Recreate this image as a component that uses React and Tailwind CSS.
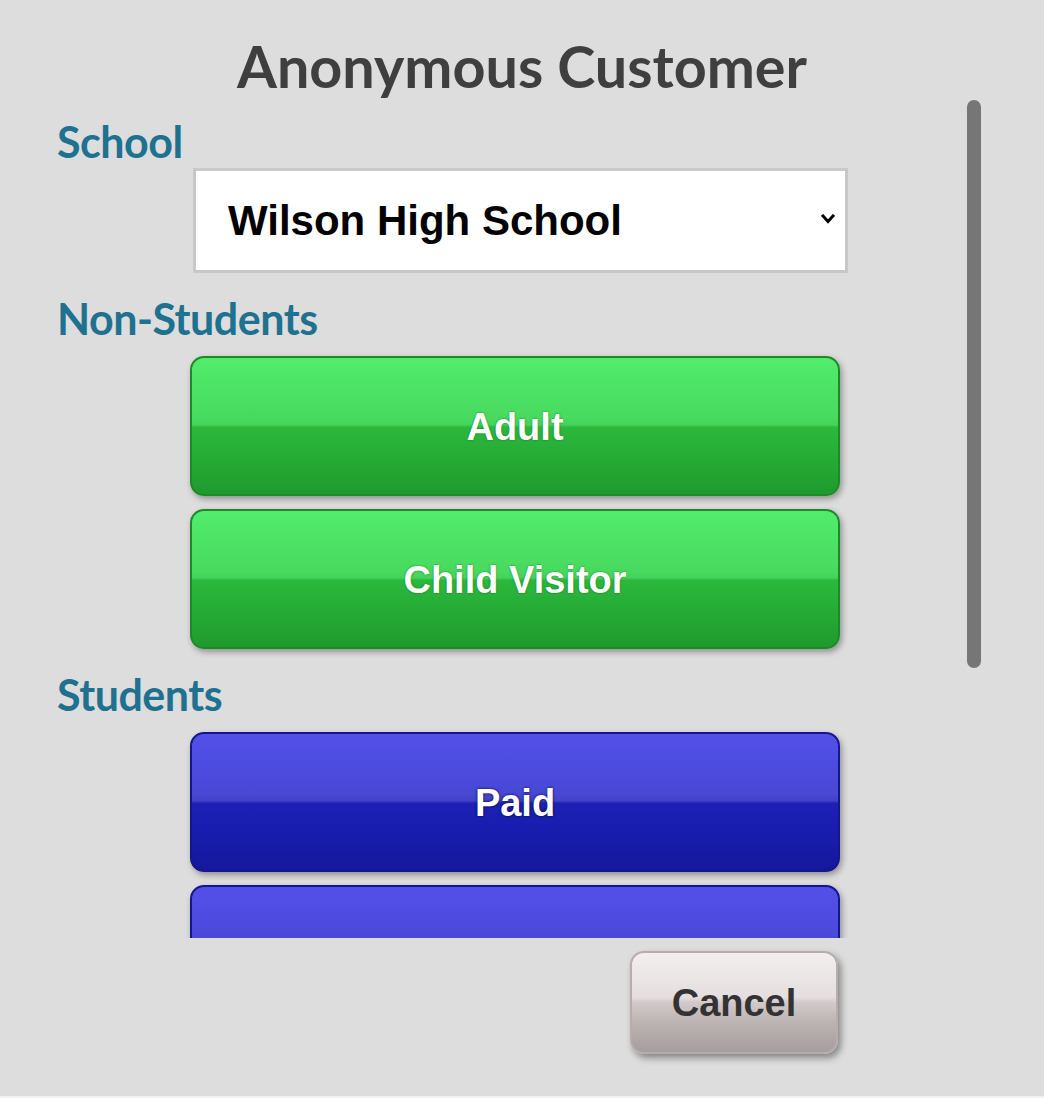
import React from "react";

const btnText =
  "font-['Liberation_Sans',Arial,sans-serif] font-bold text-[38px] text-white";

function GreenButton({ children }) {
  return (
    <button
      className={`ml-[190px] w-[650px] h-[140px] shrink-0 rounded-[14px] border-2 border-[#1d8a2a] bg-[linear-gradient(to_bottom,#52ec6c_0%,#48da5f_44%,#45d35b_49%,#2bb83c_51%,#25ab35_75%,#1f9a2d_100%)] shadow-[2px_3px_6px_rgba(0,0,0,0.35)] flex items-center justify-center pt-[2px] ${btnText} [text-shadow:0_0_2px_rgba(0,60,0,0.6)]`}
    >
      {children}
    </button>
  );
}

function BlueButton({ children }) {
  return (
    <button
      className={`ml-[190px] w-[650px] h-[140px] shrink-0 rounded-[14px] border-2 border-[#16168c] bg-[linear-gradient(to_bottom,#5250ea_0%,#4848d6_44%,#4242c8_49%,#1c20b4_51%,#181db0_70%,#14189a_100%)] shadow-[2px_3px_6px_rgba(0,0,0,0.35)] flex items-center justify-center pt-[2px] ${btnText} [text-shadow:0_0_3px_rgba(0,0,40,0.9)]`}
    >
      {children}
    </button>
  );
}

function Label({ children, first }) {
  return (
    <div
      className={`${first ? "pt-[16px] pb-0" : "pt-[20px] pb-[11px]"} pl-[57px] shrink-0`}
    >
      <div className="h-[52px] leading-[52px] text-[43px] tracking-[-0.5px] font-bold text-[#1f7190] font-['Lato',sans-serif]">
        {children}
      </div>
    </div>
  );
}

export default function App() {
  return (
    <div className="w-full h-[1098px] bg-[#dddddd] flex flex-col overflow-hidden relative">
      <div className="mt-[31px] h-[69px] leading-[69px] text-center text-[57.5px] font-bold text-[#3f3f3f] font-['Lato',sans-serif] shrink-0">
        Anonymous Customer
      </div>

      <div className="relative h-[838px] shrink-0 overflow-hidden">
        <div className="flex flex-col">
          <Label first>School</Label>
          <div className="ml-[193px] w-[655px] h-[105px] relative shrink-0">
            <select
              defaultValue="wilson"
              className="appearance-none w-full h-full bg-white border-[3px] border-[#c8c8c8] pl-[32px] text-[42px] font-bold text-black font-['Liberation_Sans',Arial,sans-serif] outline-none"
            >
              <option value="wilson">Wilson High School</option>
            </select>
            <svg
              className="absolute right-[13px] top-[46px] pointer-events-none"
              width="14"
              height="10"
              viewBox="0 0 14 10"
            >
              <path
                d="M2 2 L7 7.5 L12 2"
                fill="none"
                stroke="#000"
                strokeWidth="3"
                strokeLinecap="square"
              />
            </svg>
          </div>

          <Label>Non-Students</Label>
          <div className="flex flex-col gap-[13px]">
            <GreenButton>Adult</GreenButton>
            <GreenButton>Child Visitor</GreenButton>
          </div>

          <Label>Students</Label>
          <div className="flex flex-col gap-[13px]">
            <BlueButton>Paid</BlueButton>
            <BlueButton>Reduced</BlueButton>
          </div>
        </div>

        <div className="absolute left-[967px] top-0 w-[14px] h-[568px] rounded-full bg-[#767676]" />
      </div>

      <div className="pt-[13px] shrink-0">
        <button className="ml-[630px] w-[208px] h-[103px] rounded-[14px] border-2 border-[#b8adad] bg-[linear-gradient(to_bottom,#f3efef_0%,#e4dede_45%,#d2caca_50%,#bcb3b3_70%,#a69e9e_100%)] shadow-[3px_4px_7px_rgba(0,0,0,0.4)] flex items-center justify-center pt-[2px] font-['Liberation_Sans',Arial,sans-serif] font-bold text-[38px] text-[#333333]">
          Cancel
        </button>
      </div>

      <div className="absolute left-0 bottom-0 w-full h-[2px] bg-[#f2f2f2]" />
    </div>
  );
}
